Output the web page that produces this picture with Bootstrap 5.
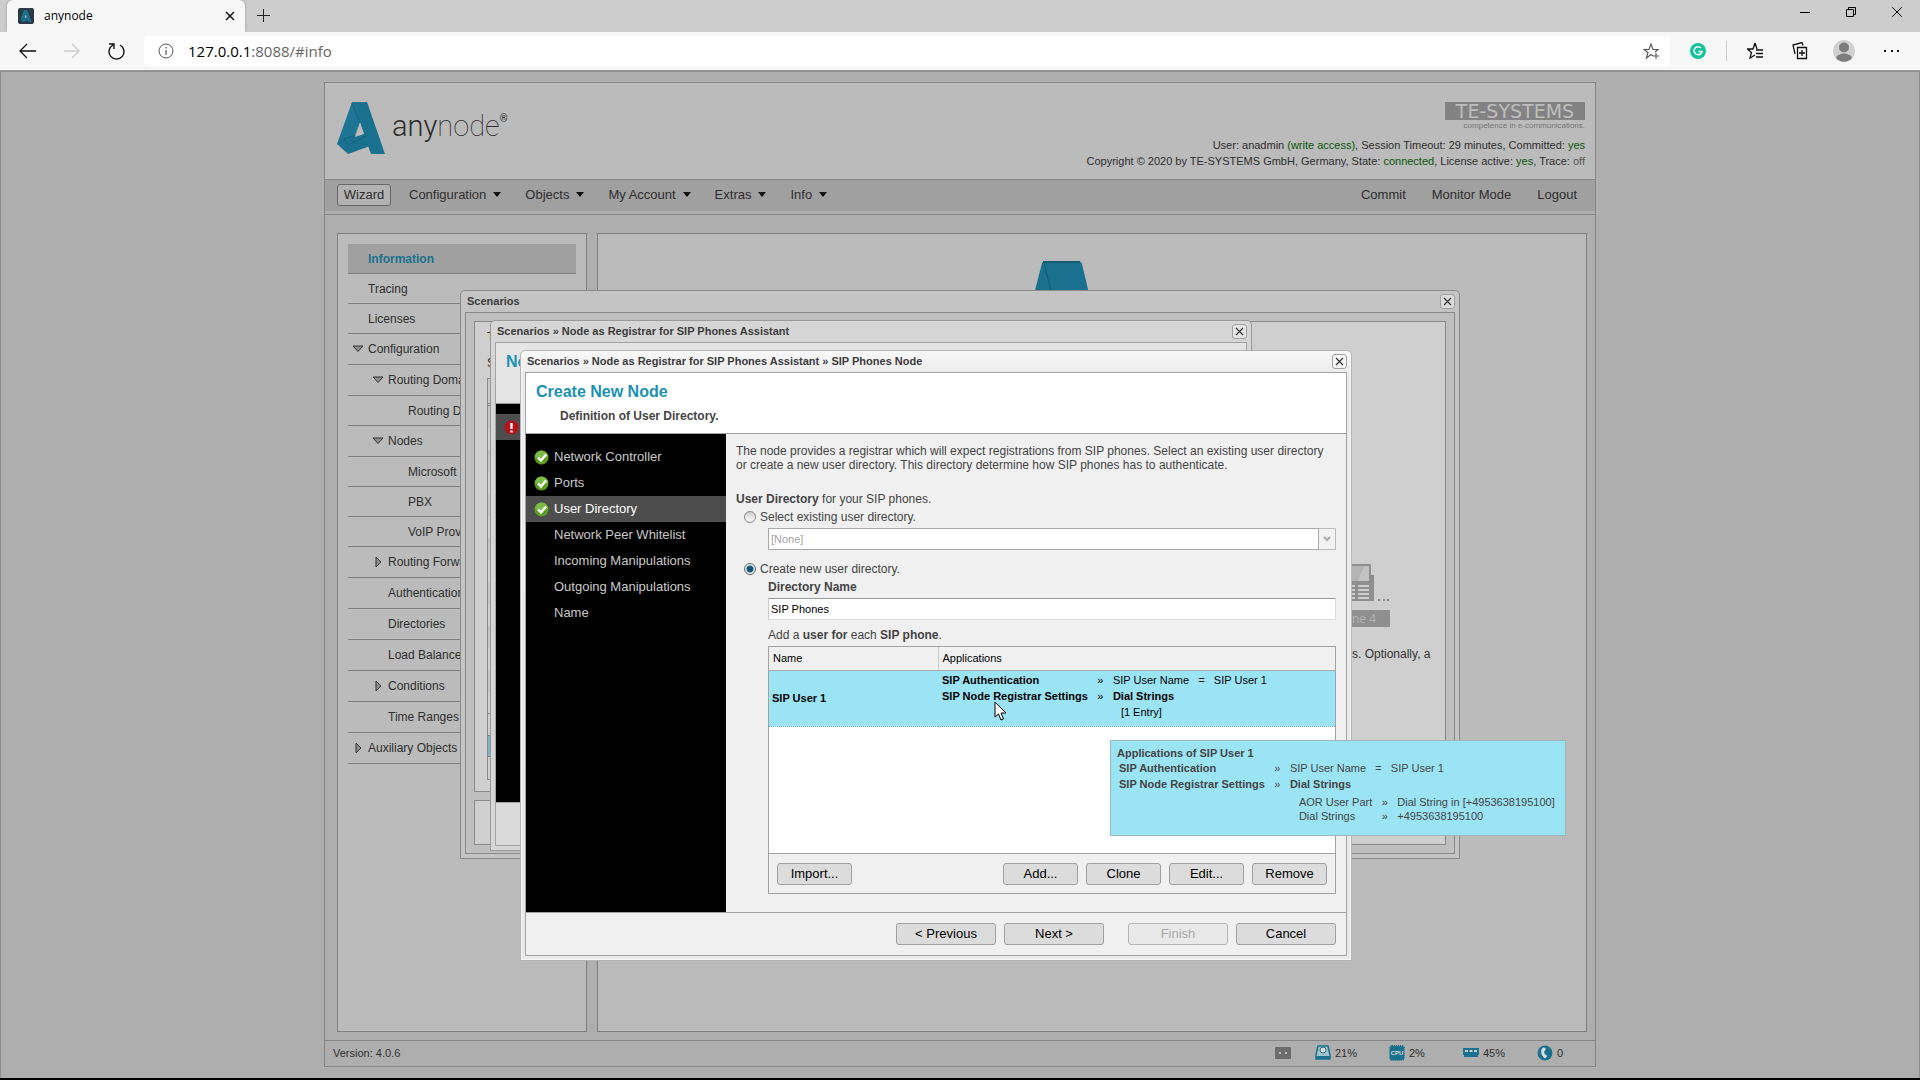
<!DOCTYPE html>
<html lang="en">
<head>
<meta charset="utf-8">
<meta name="viewport" content="width=device-width, initial-scale=1">
<title>anynode</title>
<link href="https://cdn.jsdelivr.net/npm/bootstrap@5.3.0/dist/css/bootstrap.min.css" rel="stylesheet">
<style>
  body { background: #000; font-family: "Liberation Sans", Arial, sans-serif; font-size: 12px; line-height: 14px; color: #2e2e2e; }
  button, input, select { font-family: inherit; }
  svg { display: block; flex: none; }
  .screen { min-height: 100vh; padding-bottom: 2px; overflow: hidden; }

  /* browser chrome */
  .chrome { font-family: "Open Sans", "Noto Sans", sans-serif; background: #cdcdcd; color: #000; }
  .tabstrip { height: 32px; padding-left: 7px; }
  .tab { width: 238px; height: 32px; padding: 0 10px 0 11px; background: #f7f7f7; border-radius: 6px 6px 0 0; box-shadow: 0 0 3px #999; font-size: 12px; }
  .tab-name { padding-left: 10px; }
  .toolbar { height: 39px; background: #f7f7f7; padding: 0 20px 0 19px; position: relative; border-bottom: 1px solid #999; }
  .plain { border: 0; background: none; padding: 0; color: inherit; }
  .address { height: 30px; background: #fff; border-radius: 4px; padding: 0 10px 0 14px; margin-left: 19px; }
  .url { font-size: 15px; line-height: 20px; margin-left: 14px; }
  .url-rest { color: #666; }
  .winbtns { gap: 36px; padding-right: 18px; padding-bottom: 8px; }

  /* application frame */
  .page { background: #aeaeae; border: 1px solid #8e8e8e; border-bottom: 0; padding: 10px 0 11px; }
  .app { width: 1272px; border: 1px solid #868686; position: relative; }
  .app-head { height: 96px; background: #bbb; padding: 19px 10px 0 12px; }
  .wordmark { font-family: Roboto, sans-serif; font-size: 29px; line-height: 48px; font-weight: 100; color: #2c2c2c; padding-left: 7px; }
  .wordmark b { font-weight: 300; }
  .wordmark sup { font-size: 10px; top: -14px; font-weight: 400; }
  .te-logo { background: #828282; color: #bdbdbd; font-family: "DejaVu Sans", sans-serif; font-size: 19px; line-height: 18px; width: 140px; }
  .te-sub { font-size: 8px; line-height: 11px; color: #777; margin-bottom: 6px; }
  .info-line { font-size: 11px; line-height: 16px; }
  .info-line .off { color: #555; }
  .ok { color: #0a560a; }
  .menubar { height: 32px; background: #a0a0a0; border-top: 1px solid #868686; padding: 0 18px 2px 12px; font-size: 13px; }
  .menubar a { color: #2e2e2e; text-decoration: none; }
  .menubar .dropdown-toggle::after { margin-left: 7px; vertical-align: 2px; border-width: 5px 4px 0; color: #111; }
  .wizard { border: 1px solid #666; border-radius: 3px; height: 22px; width: 54px; background: #b2b2b2; padding: 0; margin-right: 18px; color: #2e2e2e; font-size: 13px; }
  .menus { gap: 24px; }
  .right-menus { gap: 26px; }
  .workspace { margin-top: 3px; border-top: 1px solid #868686; padding: 18px 8px 8px 12px; gap: 10px; }
  .pane { background: #bbb; border: 1px solid #7f7f7f; }
  .side { width: 250px; padding: 10px; }
  .side a { display: flex; align-items: center; height: 30px; border-bottom: 1px solid #7f7f7f; color: #2e2e2e; text-decoration: none; padding-left: 20px; white-space: nowrap; }
  .side a.mid { height: 31px; }
  .side a.on { background: #a0a0a0; color: #1a718f; font-weight: bold; }
  .side a.l1 { padding-left: 40px; }
  .side a.l2 { padding-left: 60px; }
  .side a svg { margin-left: -16px; margin-right: 4px; }
  .hero { padding: 27px 58px 0 0; }
  .status { border-top: 1px solid #868686; height: 26px; font-size: 11px; padding: 0 1px 2px 8px; }
  .status .cell { width: 74px; gap: 4px; }
  .status .cell:last-child { width: 57px; }

  /* stacked windows */
  .win { position: absolute; border: 1px solid #999; border-radius: 5px 5px 0 0; padding: 0 4px 4px; display: flex; flex-direction: column; }
  .win-title { height: 21px; flex: none; font-size: 11px; font-weight: bold; color: #3c3c3c; display: flex; align-items: center; justify-content: space-between; padding: 0 0 1px 2px; }
  .win-x { width: 15px; height: 15px; padding: 0; border: 1px solid #a0a0a0; border-radius: 3px; background: rgba(255,255,255,.4); display: flex; align-items: center; justify-content: center; }
  .win-body { border: 1px solid #a3a3a3; flex: 1; display: flex; flex-direction: column; min-height: 0; overflow: hidden; }
  .w1 { left: 135px; top: 207px; width: 1000px; height: 569px; background: #c4c4c4; border-color: #8a8a8a; }
  .w1 .win-body { border-color: #8a8a8a; padding: 8px; gap: 8px; background: #bfbfbf; }
  .w1 .sheet { border: 1px solid #8a8a8a; background: #cfcfcf; }
  .w1 .low { height: 45px; }
  .scn-list { width: 640px; border: 1px solid #8a8a8a; }
  .scn-list div { height: 22px; padding-left: 3px; line-height: 24px; color: #111; }
  .scn-list div:nth-child(even) { background: #c6c6c6; }
  .scn-list .scn-head { height: 27px; border-bottom: 3px double #8a8a8a; background: #c9c9c9; }
  .scn-list .scn-gap { border-bottom: 1px solid #8a8a8a; background: none; }
  .scn-list .scn-on:nth-child(n) { background: #7fb6c4; border-block: 1px solid #5d8d9c; margin-top: 21px; }
  .phone-col { width: 80px; margin-top: 241px; margin-right: 13px; color: #333; }
  .phone-tag { width: 38px; height: 17px; background: #8f8f8f; color: #b4b4b4; font-family: "Open Sans", sans-serif; line-height: 17px; }
  .w2 { left: 165px; top: 237px; width: 762px; height: 531px; background: #d6d6d6; }
  .w2 .win-body { background: #dadada; }
  .w2 .head { height: 61px; background: #e4e4e4; border-bottom: 1px solid #999; padding: 10px; }
  .w2 .foot { background: #dadada; }
  .w3 { left: 195px; top: 267px; width: 832px; height: 611px; background: linear-gradient(#f8f8f8, #ececec 22px, #e9e9e9); border-color: #b4b4b4; box-shadow: inset 0 0 0 1px #f6f6f6; }
  .w3 .win-body { background: #f0f0f0; color: #444; }
  .headline { font-size: 16px; line-height: 18px; font-weight: bold; color: #1b92b3; margin: 0; }
  .w3 .head { height: 61px; background: #fff; border-bottom: 1px solid #a3a3a3; padding: 10px; }
  .subline { font-weight: bold; padding-left: 24px; margin-top: 8px; }
  .steps { width: 200px; flex: none; background: #000; padding-top: 10px; font-size: 13px; color: #c9c9c9; }
  .w2 .steps { flex: 1; }
  .steps a { height: 26px; display: flex; align-items: center; color: inherit; text-decoration: none; padding-left: 28px; }
  .steps a svg { margin-left: -20px; margin-right: 5px; }
  .steps .now { background: #4d4d4d; color: #fff; }
  .form-area { padding: 10px 10px 18px 10px; min-width: 0; }
  .intro { margin-bottom: 20px; white-space: nowrap; }
  .pick { gap: 4px; height: 18px; margin-left: 8px; margin-top: 2px; }
  .pick.second { margin-top: 10px; }
  .pick input { appearance: none; margin: 0; width: 12px; height: 12px; border: 1px solid #888; border-radius: 50%; background: linear-gradient(#ccc, #fff); }
  .pick input:checked { background: radial-gradient(circle, #11587a 0 3px, #e8f4fa 4px); border-color: #666; }
  .indent { margin-left: 32px; }
  .tight { margin-top: 2px; }
  .field { height: 22px; border: 1px solid #a9a9a9; border-radius: 0; background: #fff; padding: 0 2px; font-size: 11px; color: #000; min-width: 0; }
  select.field { appearance: none; color: #a3a3a3; opacity: 1; }
  input.field { border-color: #999 #ddd #ddd #ccc; }
  .drop { width: 17px; height: 22px; border: 1px solid #bbb; border-left: 0; background: #f2f2f2; }
  .grid-box { border: 1px solid #a3a3a3; background: #fff; color: #000; font-size: 11px; }
  .users { width: 100%; table-layout: fixed; line-height: 16px; }
  .users > thead th { height: 23px; background: #f0f0f0; font-weight: normal; border-bottom: 1px solid #aaa; padding: 0 4px; }
  .users > thead th:first-child { border-right: 1px solid #ccc; width: 169px; }
  .users > tbody > tr > td { background: #9be4f5; height: 56px; border-bottom: 1px dotted #5aa9cc; padding: 0 3px; }
  .users > tbody > tr > td + td { padding: 0 4px 5px; }
  .props { line-height: 16px; }
  .props td { padding: 0; white-space: nowrap; }
  .arr { width: 25px; text-align: center; }
  .bar { height: 40px; border-top: 1px solid #a3a3a3; background: #f0f0f0; padding: 1px 8px 0; gap: 8px; }
  .key { height: 22px; width: 75px; border: 1px solid #a0a0a0; border-radius: 3px; background: #dcdcdc; font-size: 13px; line-height: 18px; padding: 0; color: #000; }
  .key.wide { width: 100px; }
  .key:disabled { background: #e9e9e9; color: #a8a8a8; border-color: #b5b5b5; }
  .foot { height: 43px; flex: none; border-top: 1px solid #a3a3a3; background: #f0f0f0; padding: 0 10px; gap: 8px; }
  .tip { position: absolute; left: 589px; top: 389px; width: 456px; height: 96px; border: 1px solid #9fb6bb; background: #9be4f5; padding: 5px 6px; font-size: 11px; color: #444; }
  .tip .props { margin-left: 2px; }
  .tip .nested { line-height: 14px; margin: 3px 0 0 9px; }
  .pointer { position: absolute; left: 473px; top: 350px; }
</style>
<script src="https://cdn.jsdelivr.net/npm/bootstrap@5.3.0/dist/js/bootstrap.bundle.min.js"></script>
</head>
<body>
<svg width="0" height="0" class="position-absolute">
  <symbol id="logoA" viewBox="0 0 48 52">
    <path d="M15 0h15l18 52H34L29 38 23 21z" fill="#1a718f"/>
    <path d="M15 0h3l5 20-5 13L0 42z" fill="#1c7693"/>
    <path d="M0 42l6-6 23-6 4 14-22 8z" fill="#1a718f"/>
    <path d="M15 1l8 20-4 12-12 4 4 6 20-10" fill="none" stroke="#15637e"/>
    <path d="M23 20l4 12-9 3z" fill="#bbb"/>
  </symbol>
  <symbol id="x" viewBox="0 0 9 9"><path d="M1 1l7 7M8 1L1 8" stroke="#333" stroke-width="1.2" fill="none"/></symbol>
  <symbol id="down" viewBox="0 0 12 8"><path d="M1 1h10L6 6.500z" fill="#8e8e8e" stroke="#333"/></symbol>
  <symbol id="right" viewBox="0 0 12 12"><path d="M4 1v10l5-5z" fill="#8e8e8e" stroke="#333"/></symbol>
  <symbol id="tick" viewBox="0 0 15 15"><circle cx="7.500" cy="7.500" r="7" fill="#5c9e22"/><path d="M1 7a6.500 6.500 0 0 1 13 0q-6 2-13 0z" fill="#7cbb45"/><path d="M4 7.500l3 3 5-6" fill="none" stroke="#fff" stroke-width="2.400"/></symbol>
</svg>

<div class="screen d-flex flex-column">
  <header class="chrome">
    <div class="tabstrip d-flex align-items-center">
      <div class="tab d-flex align-items-center">
        <svg width="16" height="16"><rect width="16" height="16" rx="2" fill="#2b3a45"/><use href="#logoA" x="2" y="2" width="12" height="12"/></svg>
        <span class="tab-name flex-fill">anynode</span>
        <button class="plain" aria-label="Close tab"><svg width="10" height="10"><path d="M1 1l8 8M9 1L1 9" stroke="#111" stroke-width="1.500"/></svg></button>
      </div>
      <button class="plain ms-2 ps-1" aria-label="New tab"><svg width="14" height="14"><path d="M6.500 0v13M0 6.500h13" stroke="#222"/></svg></button>
      <div class="winbtns d-flex align-items-center ms-auto">
        <button class="plain" aria-label="Minimise"><svg width="10" height="10"><path d="M0 5.500h10" stroke="#000"/></svg></button>
        <button class="plain" aria-label="Restore"><svg width="10" height="10"><path d="M.5 2.500h7v7h-7zM2.500 2.500v-2h7v7h-2" fill="none" stroke="#000"/></svg></button>
        <button class="plain" aria-label="Close"><svg width="10" height="10"><path d="M0 0l10 10M10 0L0 10" stroke="#000"/></svg></button>
      </div>
    </div>
    <div class="toolbar d-flex align-items-center">
      <button class="plain" aria-label="Back"><svg width="17" height="16"><path d="M17 8H1M8 1L1 8l7 7" fill="none" stroke="#111" stroke-width="1.300"/></svg></button>
      <button class="plain ms-4 ps-1" aria-label="Forward"><svg width="16" height="16"><path d="M0 8h15M8 1l7 7-7 7" fill="none" stroke="#ccc" stroke-width="1.300"/></svg></button>
      <button class="plain ms-4 ps-1" aria-label="Reload"><svg width="17" height="18"><path d="M5 3a7.500 7.500 0 1 0 7 0M1 2h5v5" fill="none" stroke="#111" stroke-width="1.400"/></svg></button>
      <div class="address d-flex align-items-center flex-fill">
        <svg width="16" height="16"><circle cx="8" cy="8" r="7" fill="none" stroke="#555"/><path d="M8 7v5M8 4v1.500" stroke="#555" stroke-width="1.200"/></svg>
        <span class="url">127.0.0.1<span class="url-rest">:8088/#info</span></span>
        <svg class="ms-auto" width="17" height="17"><path d="M10 13L8 11.500 3.500 15 5 9.500 1 6.500h5L8 1l2 5.500h5L12 9M13 10v6M10 13h6" fill="none" stroke="#555" stroke-width="1.100"/></svg>
      </div>
      <div class="d-flex align-items-center ms-3">
        <svg class="ms-1" width="16" height="16"><circle cx="8" cy="8" r="8" fill="#15c39a"/><path d="M11 5a4 4 0 1 0 1 3.500H8.500" fill="none" stroke="#fff" stroke-width="1.500"/></svg>
        <svg class="ms-3" width="9" height="20"><path d="M4.500 0v20" stroke="#ccc"/></svg>
        <svg class="ms-3" width="17" height="16"><path d="M8 12L3 15 4.500 9.500.5 6H6L8 0l2 6M9 7h7M9 10.500h7M9 14h7" fill="none" stroke="#111" stroke-width="1.300"/></svg>
        <svg class="ms-4 ps-1" width="20" height="18"><path d="M5.500 5.500h9v11h-9zM10 8v6M7 11h6M3 12L1 3l9-2.500 1 3" fill="none" stroke="#111" stroke-width="1.300"/></svg>
        <svg class="ms-4" width="24" height="24"><circle cx="12" cy="12" r="11" fill="#d0d0d0"/><circle cx="12" cy="8.500" r="5" fill="#7d7d7d"/><path d="M4 19c2-6 14-6 16 0-4 5-12 5-16 0z" fill="#7d7d7d"/></svg>
        <svg class="ms-4 ps-1" width="20" height="4"><path d="M0 2h2M7 2h2M13 2h2" stroke="#111" stroke-width="2"/></svg>
      </div>
    </div>
  </header>

  <main class="page flex-fill d-flex justify-content-center">
    <div class="app d-flex flex-column">
      <div class="app-head d-flex justify-content-between">
        <div class="d-flex align-items-start">
          <svg width="48" height="52"><use href="#logoA"/></svg>
          <span class="wordmark"><b>any</b>node<sup>®</sup></span>
        </div>
        <div class="d-flex flex-column align-items-end">
          <div class="te-logo text-center">TE-SYSTEMS</div>
          <div class="te-sub">competence in e-communications.</div>
          <div class="info-line">User: anadmin <span class="ok">(write access)</span>, Session Timeout: 29 minutes, Committed: <span class="ok">yes</span></div>
          <div class="info-line">Copyright © 2020 by TE-SYSTEMS GmbH, Germany, State: <span class="ok">connected</span>, License active: <span class="ok">yes</span>, Trace: <span class="off">off</span></div>
        </div>
      </div>
      <nav class="menubar d-flex align-items-center">
        <button class="wizard">Wizard</button>
        <div class="menus d-flex">
          <a href="#" class="dropdown-toggle">Configuration</a>
          <a href="#" class="dropdown-toggle">Objects</a>
          <a href="#" class="dropdown-toggle">My Account</a>
          <a href="#" class="dropdown-toggle">Extras</a>
          <a href="#" class="dropdown-toggle">Info</a>
        </div>
        <div class="right-menus d-flex ms-auto">
          <a href="#">Commit</a><a href="#">Monitor Mode</a><a href="#">Logout</a>
        </div>
      </nav>
      <div class="workspace d-flex flex-fill">
        <nav class="pane side">
          <a href="#" class="on">Information</a>
          <a href="#">Tracing</a>
          <a href="#">Licenses</a>
          <a href="#" class="mid"><svg width="12" height="8"><use href="#down"/></svg>Configuration</a>
          <a href="#" class="mid l1"><svg width="12" height="8"><use href="#down"/></svg>Routing Domains</a>
          <a href="#" class="l2">Routing Domain</a>
          <a href="#" class="mid l1"><svg width="12" height="8"><use href="#down"/></svg>Nodes</a>
          <a href="#" class="l2">Microsoft</a>
          <a href="#" class="l2">PBX</a>
          <a href="#" class="l2">VoIP Provider</a>
          <a href="#" class="mid l1"><svg width="12" height="12"><use href="#right"/></svg>Routing Forward</a>
          <a href="#" class="mid l1">Authentication</a>
          <a href="#" class="mid l1">Directories</a>
          <a href="#" class="mid l1">Load Balancer</a>
          <a href="#" class="mid l1"><svg width="12" height="12"><use href="#right"/></svg>Conditions</a>
          <a href="#" class="mid l1">Time Ranges</a>
          <a href="#" class="mid"><svg width="12" height="12"><use href="#right"/></svg>Auxiliary Objects</a>
        </nav>
        <section class="pane hero flex-fill">
          <svg class="ms-auto me-auto" width="84" height="100" viewBox="0 0 84 100"><path d="M21 2q1-2 3-2h33q3 0 4 3l23 97H60L30 30 0 84z" fill="#1a718f"/><path d="M22 1h37" stroke="#155c75" stroke-width="2"/><path d="M23 2l7 28" stroke="#135a73" fill="none"/></svg>
        </section>
      </div>
      <footer class="status d-flex align-items-center">
        <span>Version: 4.0.6</span>
        <div class="d-flex align-items-center ms-auto">
          <svg class="me-4" width="16" height="12"><rect width="16" height="12" rx="1" fill="#6c6c6c"/><path d="M4 6h2M10 6h2" stroke="#bbb" stroke-width="2"/></svg>
          <div class="cell d-flex align-items-center"><svg width="16" height="15"><path d="M3 1h10l2 9v4H1v-4z" fill="#a4c4cd" stroke="#1a718f" stroke-width="1.500"/><circle cx="8" cy="5" r="3" fill="#ddd" stroke="#1a718f"/><path d="M1 11h14v3H1z" fill="#1a718f"/></svg>21%</div>
          <div class="cell d-flex align-items-center"><svg width="16" height="16"><rect x="1" y="1" width="14" height="14" rx="2" fill="#1a718f" stroke="#1a718f" stroke-dasharray="1 1" stroke-width="2"/><text x="8" y="10" font-size="6" font-weight="bold" fill="#ddd" text-anchor="middle">CPU</text></svg>2%</div>
          <div class="cell d-flex align-items-center"><svg width="16" height="10"><path d="M0 0h16v7h-1v2H1V7H0z" fill="#1a718f"/><path d="M2 3h3M6.500 3h3M11 3h3" stroke="#ccc" stroke-width="2"/></svg>45%</div>
          <div class="cell d-flex align-items-center"><svg width="16" height="16"><circle cx="8" cy="8" r="7.500" fill="#1a718f"/><path d="M6 2.500c-3 3-2 8 2 11l2-2-1-2H8C7 8 7 7 7.500 6l1-1V3z" fill="#ddd"/></svg>0</div>
        </div>
      </footer>

      <section class="win w1">
        <div class="win-title"><span>Scenarios</span><button class="win-x" aria-label="Close"><svg width="9" height="9"><use href="#x"/></svg></button></div>
        <div class="win-body">
          <div class="sheet flex-fill d-flex justify-content-between ps-2">
            <div class="ps-1 pt-2">
              <div>T</div>
              <div class="mt-2 pt-1 mb-2">S</div>
              <div class="scn-list">
                <div class="scn-head"></div>
                <div>.</div><div>.</div><div>.</div><div>.</div><div>.</div><div>.</div><div>.</div><div>.</div><div>.</div><div>.</div><div>.</div><div>.</div><div>.</div>
                <div class="scn-gap"></div>
                <div class="scn-on">C</div><div>A</div>
              </div>
            </div>
            <div class="phone-col">
              <svg width="40" height="39"><path d="M0 1h19v11h3v26H0z" fill="#8f8f8f"/><path d="M0 3h17v15H0z" fill="#b4b4b4"/><path d="M12 3h5v15H6z" fill="#c2c2c2"/><path d="M0 23h3M6 23h11M0 27h3M6 27h11M0 31h3M6 31h11M0 35h3M6 35h11" stroke="#ccc" stroke-width="2"/><path d="M26 37h2M31 37h2M35 37h2" stroke="#888" stroke-width="2"/></svg>
              <div class="phone-tag mt-2">ne 4</div>
              <div class="mt-3 pt-1 text-nowrap">s. Optionally, a</div>
            </div>
          </div>
          <div class="sheet low"></div>
        </div>
      </section>

      <section class="win w2">
        <div class="win-title"><span>Scenarios » Node as Registrar for SIP Phones Assistant</span><button class="win-x" aria-label="Close"><svg width="9" height="9"><use href="#x"/></svg></button></div>
        <div class="win-body">
          <div class="head"><h2 class="headline">No</h2></div>
          <div class="d-flex flex-fill"><nav class="steps"><a href="#" class="now" aria-label="Step with an error"><svg width="15" height="15"><circle cx="7.500" cy="7.500" r="7" fill="#b8101c"/><path d="M7.500 3v6M7.500 10.500v2" stroke="#eee" stroke-width="2.500"/></svg></a></nav></div>
          <div class="foot"></div>
        </div>
      </section>

      <section class="win w3">
        <div class="win-title"><span>Scenarios » Node as Registrar for SIP Phones Assistant » SIP Phones Node</span><button class="win-x" aria-label="Close"><svg width="9" height="9"><use href="#x"/></svg></button></div>
        <div class="win-body">
          <div class="head">
            <h1 class="headline">Create New Node</h1>
            <div class="subline">Definition of User Directory.</div>
          </div>
          <div class="d-flex flex-fill">
            <nav class="steps">
              <a href="#"><svg width="15" height="15"><use href="#tick"/></svg>Network Controller</a>
              <a href="#"><svg width="15" height="15"><use href="#tick"/></svg>Ports</a>
              <a href="#" class="now"><svg width="15" height="15"><use href="#tick"/></svg>User Directory</a>
              <a href="#">Network Peer Whitelist</a>
              <a href="#">Incoming Manipulations</a>
              <a href="#">Outgoing Manipulations</a>
              <a href="#">Name</a>
            </nav>
            <form class="form-area flex-fill d-flex flex-column">
              <p class="intro">The node provides a registrar which will expect registrations from SIP phones. Select an existing user directory<br>or create a new user directory. This directory determine how SIP phones has to authenticate.</p>
              <div><b>User Directory</b> for your SIP phones.</div>
              <div class="pick d-flex align-items-center"><input type="radio" name="dir" id="dirOld"><label for="dirOld">Select existing user directory.</label></div>
              <div class="indent tight d-flex"><select class="field flex-fill" aria-label="Existing user directory" disabled><option>[None]</option></select><span class="drop d-flex align-items-center justify-content-center"><svg width="8" height="6"><path d="M1 1l3 3 3-3" fill="none" stroke="#aaa" stroke-width="2"/></svg></span></div>
              <div class="pick second d-flex align-items-center"><input type="radio" name="dir" id="dirNew" checked><label for="dirNew">Create new user directory.</label></div>
              <label for="dirName" class="indent tight fw-bold">Directory Name</label>
              <input id="dirName" class="field indent mt-1" value="SIP Phones">
              <div class="indent mt-2 mb-1">Add a <b>user for</b> each <b>SIP phone</b>.</div>
              <div class="grid-box indent flex-fill d-flex flex-column">
                <table class="users">
                  <thead><tr><th>Name</th><th>Applications</th></tr></thead>
                  <tbody><tr><td><b>SIP User 1</b></td><td>
                    <table class="props">
                      <tr><td><b>SIP Authentication</b></td><td class="arr">»</td><td>SIP User Name &nbsp; = &nbsp; SIP User 1</td></tr>
                      <tr><td><b>SIP Node Registrar Settings</b></td><td class="arr">»</td><td><b>Dial Strings</b></td></tr>
                      <tr><td></td><td></td><td class="ps-2">[1 Entry]</td></tr>
                    </table>
                  </td></tr></tbody>
                </table>
                <div class="bar d-flex align-items-center mt-auto">
                  <button type="button" class="key me-auto">Import...</button>
                  <button type="button" class="key">Add...</button>
                  <button type="button" class="key">Clone</button>
                  <button type="button" class="key">Edit...</button>
                  <button type="button" class="key">Remove</button>
                </div>
              </div>
            </form>
          </div>
          <div class="foot d-flex align-items-center justify-content-end">
            <button class="key wide">&lt; Previous</button>
            <button class="key wide me-3">Next &gt;</button>
            <button class="key wide" disabled>Finish</button>
            <button class="key wide">Cancel</button>
          </div>
        </div>
        <div class="tip" role="tooltip">
          <b>Applications of SIP User 1</b>
          <table class="props">
            <tr><td><b>SIP Authentication</b></td><td class="arr">»</td><td>SIP User Name &nbsp; = &nbsp; SIP User 1</td></tr>
            <tr><td><b>SIP Node Registrar Settings</b></td><td class="arr">»</td><td><b>Dial Strings</b></td></tr>
            <tr><td></td><td></td><td>
              <table class="props nested">
                <tr><td>AOR User Part</td><td class="arr">»</td><td>Dial String in [+4953638195100]</td></tr>
                <tr><td>Dial Strings</td><td class="arr">»</td><td>+4953638195100</td></tr>
              </table>
            </td></tr>
          </table>
        </div>
        <svg class="pointer" width="13" height="20"><path d="M1 1v15l3.500-3 2.500 6 2.500-1L7 12h5z" fill="#fff" stroke="#000"/></svg>
      </section>
    </div>
  </main>
</div>
</body>
</html>
